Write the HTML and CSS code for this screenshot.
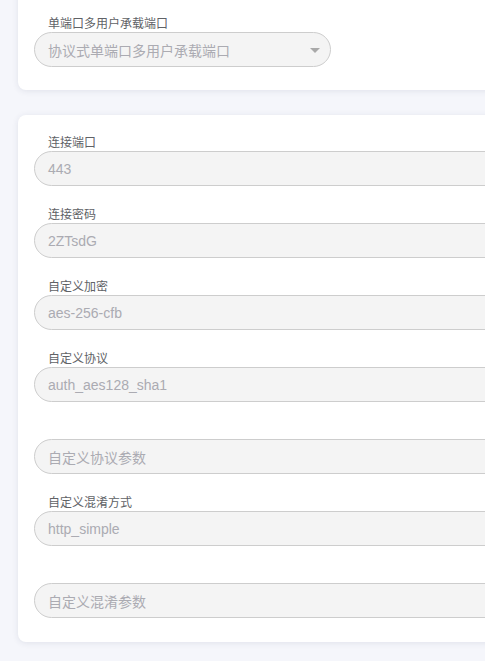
FILE: index.html
```html
<!DOCTYPE html>
<html lang="zh">
<head>
<meta charset="utf-8">
<link rel="stylesheet" href="styles.css">
</head>
<body>
<div class="page">
  <section class="card card-top">
    <div class="field">
      <div class="label">单端口多用户承载端口</div>
      <div class="select">
        <span class="value">协议式单端口多用户承载端口</span>
        <span class="arrow"></span>
      </div>
    </div>
  </section>
  <section class="card card-main">
    <div class="field">
      <div class="label">连接端口</div>
      <div class="input"><span class="value">443</span></div>
    </div>
    <div class="field">
      <div class="label">连接密码</div>
      <div class="input"><span class="value">2ZTsdG</span></div>
    </div>
    <div class="field">
      <div class="label">自定义加密</div>
      <div class="input"><span class="value">aes-256-cfb</span></div>
    </div>
    <div class="field">
      <div class="label">自定义协议</div>
      <div class="input"><span class="value">auth_aes128_sha1</span></div>
    </div>
    <div class="field">
      <div class="label"></div>
      <div class="input"><span class="value">自定义协议参数</span></div>
    </div>
    <div class="field">
      <div class="label">自定义混淆方式</div>
      <div class="input"><span class="value">http_simple</span></div>
    </div>
    <div class="field">
      <div class="label"></div>
      <div class="input"><span class="value">自定义混淆参数</span></div>
    </div>
  </section>
</div>
</body>
</html>
```
FILE: styles.css
```css
html, body {
  margin: 0;
  padding: 0;
  background: #f5f6fb;
  overflow: hidden;
  width: 485px;
  height: 661px;
}
body {
  font-family: "Liberation Sans", "Noto Sans CJK SC", sans-serif;
}
.page {
  padding-left: 18px;
  display: flex;
  flex-direction: column;
  gap: 25px;
  width: 640px;
}
.card {
  background: #fff;
  border-radius: 8px;
  box-shadow: 0 1px 6px rgba(40, 50, 90, 0.10);
  padding: 0 16px;
  display: flex;
  flex-direction: column;
  gap: 20px;
}
.card-top {
  margin-top: -20px;
  padding-top: 35px;
  padding-bottom: 23px;
}
.card-main {
  padding-top: 19px;
  padding-bottom: 24px;
}
.field {
  display: flex;
  flex-direction: column;
}
.label {
  box-sizing: border-box;
  height: 17px;
  padding-top: 1px;
  line-height: 17px;
  font-size: 12px;
  color: #606266;
  padding-left: 14px;
}
.input, .select {
  box-sizing: border-box;
  height: 35px;
  border: 1px solid #cdcdcd;
  border-radius: 18px;
  background: #f4f4f4;
  display: flex;
  align-items: center;
  padding-left: 13px;
  font-size: 14px;
  color: #ababb2;
}
.select {
  width: 297px;
  justify-content: space-between;
  padding-right: 10px;
}
.arrow {
  width: 0;
  height: 0;
  border-left: 5px solid transparent;
  border-right: 5px solid transparent;
  border-top: 5px solid #a9a9a9;
  margin-top: 2px;
}
```
